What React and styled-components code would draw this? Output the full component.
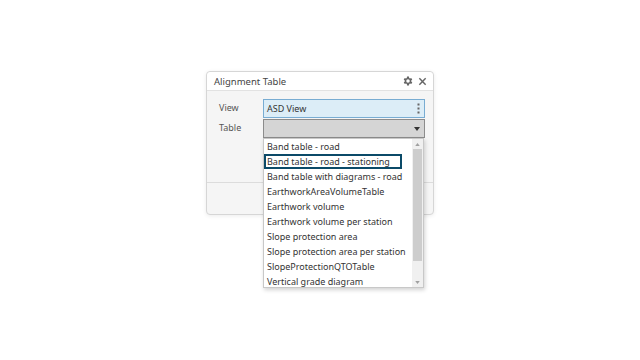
import React from "react";
import styled, { createGlobalStyle } from "styled-components";

const Global = createGlobalStyle`
  html, body { margin: 0; padding: 0; background: #ffffff; }
  body { font-family: "Noto Sans", "Open Sans", sans-serif; color: #333; }
`;

const Page = styled.div`
  width: 640px;
  height: 360px;
  padding: 71px 0 0 206px;
  box-sizing: border-box;
`;

const Dialog = styled.div`
  position: relative;
  width: 228px;
  height: 144px;
  box-sizing: border-box;
  border: 1px solid #d6d6d6;
  border-radius: 4px;
  background: #f5f5f5;
  box-shadow: 0 1px 4px rgba(0, 0, 0, 0.08);
  display: flex;
  flex-direction: column;
`;

const Header = styled.div`
  height: 18px;
  display: flex;
  align-items: center;
  justify-content: space-between;
  padding: 0 6px 0 7px;
  background: #ffffff;
  border-bottom: 1px solid #e2e2e2;
  border-radius: 4px 4px 0 0;
`;

const Title = styled.span`
  font-size: 9.5px;
  color: #444;
`;

const Tools = styled.div`
  display: flex;
  align-items: center;
  gap: 4px;
`;

const Body = styled.div`
  flex: 1;
  display: flex;
  flex-direction: column;
  padding: 8px 8px 0 12px;
  gap: 1px;
  border-bottom: 1px solid #dcdcdc;
`;

const Row = styled.div`
  position: relative;
  display: grid;
  grid-template-columns: 44px 162px;
  align-items: start;
`;

const Label = styled.span`
  font-size: 9px;
  color: #555;
  line-height: 17px;
`;

const Field = styled.div`
  height: 19px;
  box-sizing: border-box;
  display: flex;
  align-items: center;
  justify-content: space-between;
  padding: 0 4px 0 3px;
  font-size: 9px;
  color: #333;
  background: ${(p) => (p.$variant === "view" ? "#dcedf7" : "#d5d5d5")};
  border: 1px solid ${(p) => (p.$variant === "view" ? "#78acd2" : "#8c8c8c")};
`;

const Footer = styled.div`
  height: 31px;
`;

const List = styled.div`
  position: absolute;
  left: 44px;
  top: 19px;
  width: 161px;
  height: 150px;
  box-sizing: border-box;
  background: #ffffff;
  border: 1px solid #c8c8c8;
  box-shadow: 1px 2px 4px rgba(0, 0, 0, 0.18);
  display: flex;
  z-index: 2;
`;

const Items = styled.div`
  flex: 1;
  display: flex;
  flex-direction: column;
`;

const Item = styled.div`
  height: 15px;
  box-sizing: border-box;
  width: ${(p) => (p.$selected ? "138px" : "auto")};
  line-height: ${(p) => (p.$selected ? "11px" : "15px")};
  padding-left: ${(p) => (p.$selected ? "1px" : "3px")};
  border: ${(p) => (p.$selected ? "2px solid #0b4a68" : "none")};
  font-size: 9px;
  color: #333;
  white-space: nowrap;
`;

const Scroll = styled.div`
  width: 11px;
  display: flex;
  flex-direction: column;
  align-items: center;
  background: #f0f0f0;
  padding: 0 1px;
  box-sizing: border-box;
`;

const Arrow = styled.div`
  height: 10px;
  display: flex;
  align-items: center;
  justify-content: center;
`;

const Thumb = styled.div`
  width: 9px;
  height: 112px;
  background: #cdcdcd;
`;

const Spacer = styled.div`
  flex: 1;
`;

const items = [
  "Band table - road",
  "Band table - road - stationing",
  "Band table with diagrams - road",
  "EarthworkAreaVolumeTable",
  "Earthwork volume",
  "Earthwork volume per station",
  "Slope protection area",
  "Slope protection area per station",
  "SlopeProtectionQTOTable",
  "Vertical grade diagram",
];

const Gear = () => (
  <svg width="12" height="12" viewBox="0 0 24 24">
    <path
      fill="#666"
      fillRule="evenodd"
      d="M19.4 13a7.5 7.5 0 0 0 0-2l2.1-1.6-2-3.5-2.5 1a7.6 7.6 0 0 0-1.7-1L15 3.2h-4l-.4 2.7a7.6 7.6 0 0 0-1.7 1l-2.5-1-2 3.5L6.6 11a7.5 7.5 0 0 0 0 2l-2.1 1.6 2 3.5 2.5-1a7.6 7.6 0 0 0 1.7 1l.3 2.7h4l.4-2.7a7.6 7.6 0 0 0 1.7-1l2.5 1 2-3.5L19.4 13zM13 15.5a3.5 3.5 0 1 1 0-7 3.5 3.5 0 0 1 0 7z"
      transform="translate(-1 0)"
    />
  </svg>
);

const Close = () => (
  <svg width="9" height="9" viewBox="0 0 10 10">
    <path d="M1.5 1.5l7 7M8.5 1.5l-7 7" stroke="#666" strokeWidth="1.6" />
  </svg>
);

const Kebab = () => (
  <svg width="3" height="11" viewBox="0 0 3 11">
    <rect x="0.5" y="0.5" width="2" height="2" fill="#666" />
    <rect x="0.5" y="4.5" width="2" height="2" fill="#666" />
    <rect x="0.5" y="8.5" width="2" height="2" fill="#666" />
  </svg>
);

const Tri = ({ up, color = "#333", w = 6, h = 4 }) => (
  <svg width={w} height={h} viewBox="0 0 6 4">
    <path d={up ? "M0 4L3 0L6 4Z" : "M0 0L6 0L3 4Z"} fill={color} />
  </svg>
);

export default function App() {
  return (
    <>
      <Global />
      <Page>
        <Dialog>
          <Header>
            <Title>Alignment Table</Title>
            <Tools>
              <Gear />
              <Close />
            </Tools>
          </Header>
          <Body>
            <Row>
              <Label>View</Label>
              <Field $variant="view">
                <span>ASD View</span>
                <Kebab />
              </Field>
            </Row>
            <Row>
              <Label>Table</Label>
              <Field $variant="table">
                <span />
                <Tri color="#333" w={6} h={4} />
              </Field>
              <List>
                <Items>
                  {items.map((t, i) => (
                    <Item key={t} $selected={i === 1}>
                      {t}
                    </Item>
                  ))}
                </Items>
                <Scroll>
                  <Arrow>
                    <Tri up color="#a0a0a0" w={5} h={3} />
                  </Arrow>
                  <Thumb />
                  <Spacer />
                  <Arrow>
                    <Tri color="#a0a0a0" w={5} h={3} />
                  </Arrow>
                </Scroll>
              </List>
            </Row>
          </Body>
          <Footer />
        </Dialog>
      </Page>
    </>
  );
}
